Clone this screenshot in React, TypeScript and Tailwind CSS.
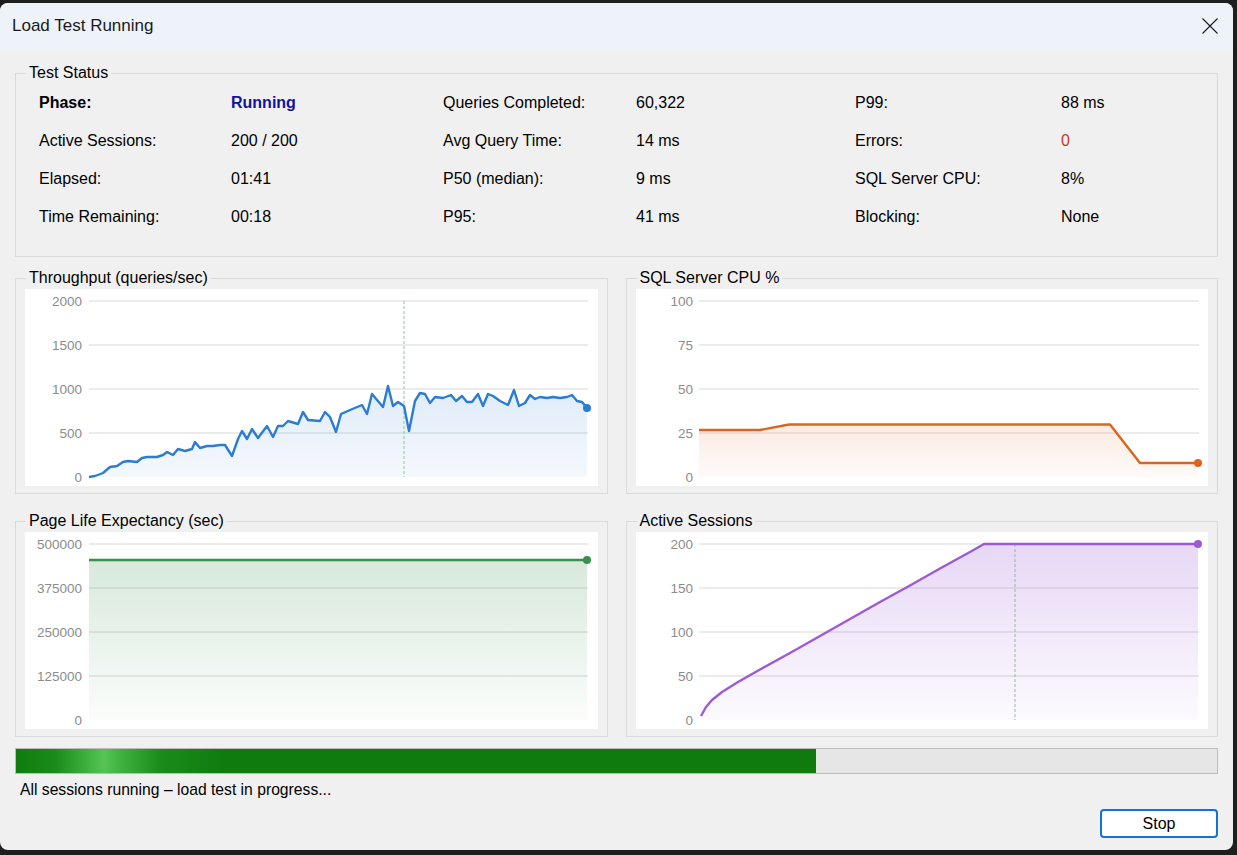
import React from "react";

type Pt = [number, number];

const thr: Pt[] = [
  [89, 478], [95, 477], [103, 474], [110, 468], [117, 467], [123, 463], [128, 462], [137, 463], [142, 459],
  [147, 458], [157, 458], [163, 456], [167, 453], [173, 456], [178, 450], [185, 452], [192, 450], [195, 443],
  [200, 449], [207, 447], [213, 447], [220, 446], [225, 446], [232, 457], [238, 440], [242, 432], [247, 440],
  [252, 430], [258, 439], [267, 427], [273, 438], [278, 427], [283, 427], [288, 422], [298, 425], [303, 413],
  [308, 421], [320, 422], [325, 413], [330, 418], [336, 433], [341, 415], [350, 411], [362, 406], [367, 415],
  [372, 395], [383, 408], [388, 387], [393, 407], [398, 403], [404, 407], [409, 432], [415, 402], [420, 394],
  [425, 395], [430, 404], [435, 398], [443, 399], [451, 396], [456, 402], [462, 397], [467, 403], [472, 403],
  [478, 395], [483, 407], [488, 395], [493, 397], [500, 402], [508, 406], [514, 391], [519, 407], [525, 404],
  [530, 396], [535, 400], [540, 398], [547, 399], [553, 398], [560, 399], [567, 398], [572, 396], [577, 402],
  [582, 403], [587, 409],
];

const cpu: Pt[] = [
  [699, 431], [760, 431], [789, 425.5], [1110, 425.5], [1140, 464], [1198, 464],
];

const ple: Pt[] = [
  [89, 561], [587, 561],
];

const ses: Pt[] = [
  [701, 717], [706, 708], [712, 701], [722, 693], [738, 683], [760, 670.5], [790, 654], [820, 637],
  [850, 620], [880, 603], [910, 586.5], [940, 569.5], [970, 553], [984, 545], [1198, 545],
];

function linePath(pts: Pt[]) {
  return pts.map((p, i) => `${i ? "L" : "M"}${p[0]},${p[1]}`).join(" ");
}

function areaPath(pts: Pt[], baseY: number) {
  const last = pts[pts.length - 1];
  const first = pts[0];
  return `${linePath(pts)} L${last[0]},${baseY} L${first[0]},${baseY} Z`;
}

type ChartProps = {
  id: string;
  title: string;
  vb: [number, number, number, number];
  labels: { t: string; y: number }[];
  labelX: number;
  gx1: number;
  gx2: number;
  baseY: number;
  pts: Pt[];
  color: string;
  aTop: number;
  aBot: number;
  dash?: { x: number; y1: number; y2: number; c: string };
};

function ChartBox(p: ChartProps) {
  const last = p.pts[p.pts.length - 1];
  return (
    <fieldset className="min-w-0 border border-[#dadada] px-[9px] pt-[2px] pb-[7px]">
      <legend className="ml-[1px] px-[3px] text-[16px] leading-[18px] text-black">{p.title}</legend>
      <div className="h-[197px] overflow-hidden bg-white">
        <svg width={p.vb[2]} height={p.vb[3]} viewBox={p.vb.join(" ")} className="block">
          <defs>
            <linearGradient id={p.id} x1="0" y1="0" x2="0" y2="1">
              <stop offset="0%" stopColor={p.color} stopOpacity={p.aTop} />
              <stop offset="100%" stopColor={p.color} stopOpacity={p.aBot} />
            </linearGradient>
          </defs>
          {p.labels.map((l) => (
            <g key={l.t}>
              {l.y < p.baseY - 2 && (
                <line x1={p.gx1} x2={p.gx2} y1={l.y} y2={l.y} stroke="#e4e4e4" strokeWidth={1.5} />
              )}
              <text
                x={p.labelX}
                y={l.y}
                textAnchor="end"
                dominantBaseline="central"
                fontFamily="'Liberation Sans', Arial, sans-serif"
                fontSize={13.5}
                fill="#8c8c8c"
              >
                {l.t}
              </text>
            </g>
          ))}
          <path d={areaPath(p.pts, p.baseY)} fill={`url(#${p.id})`} />
          {p.dash && (
            <line
              x1={p.dash.x}
              x2={p.dash.x}
              y1={p.dash.y1}
              y2={p.dash.y2}
              stroke={p.dash.c}
              strokeWidth={1}
              strokeDasharray="3 2"
            />
          )}
          <path d={linePath(p.pts)} fill="none" stroke={p.color} strokeWidth={2.4} strokeLinejoin="round" />
          <circle cx={last[0]} cy={last[1]} r={4} fill={p.color} />
        </svg>
      </div>
    </fieldset>
  );
}

const rows: { l: string; v: string; vc?: string; bold?: boolean }[][] = [
  [
    { l: "Phase:", v: "Running", vc: "text-[#12129c] font-bold", bold: true },
    { l: "Queries Completed:", v: "60,322" },
    { l: "P99:", v: "88 ms" },
  ],
  [
    { l: "Active Sessions:", v: "200 / 200" },
    { l: "Avg Query Time:", v: "14 ms" },
    { l: "Errors:", v: "0", vc: "text-[#c0392b]" },
  ],
  [
    { l: "Elapsed:", v: "01:41" },
    { l: "P50 (median):", v: "9 ms" },
    { l: "SQL Server CPU:", v: "8%" },
  ],
  [
    { l: "Time Remaining:", v: "00:18" },
    { l: "P95:", v: "41 ms" },
    { l: "Blocking:", v: "None" },
  ],
];

export default function App() {
  return (
    <div className="h-[855px] w-[1237px] overflow-hidden bg-[#1e1e1e] pt-[3px] font-['Liberation_Sans',Arial,sans-serif] text-black">
      <div className="flex h-[847px] w-[1233px] flex-col overflow-hidden rounded-[8px] bg-[#f0f0f0]">
        {/* Title bar */}
        <div className="flex h-[47px] shrink-0 items-center justify-between bg-[#eef2f9] pb-[1px] pl-[12px] pr-[15px]">
          <span className="text-[17px] leading-[20px] text-[#1a1a1a]">Load Test Running</span>
          <svg width="16" height="16" viewBox="0 0 16 16" className="block">
            <path d="M0.5 0.5 L15.5 15.5 M15.5 0.5 L0.5 15.5" stroke="#1a1a1a" strokeWidth="1.1" fill="none" />
          </svg>
        </div>

        <div className="flex flex-col px-[15px]">
          {/* Test Status */}
          <fieldset className="mt-[14px] border border-[#dadada] px-[9px] pt-[2px] pb-[20px]">
            <legend className="ml-[1px] px-[3px] text-[16px] leading-[18px]">Test Status</legend>
            <div className="ml-[14px] grid grid-cols-[192px_212px_193px_219px_206px_1fr] text-[16px] leading-[20px]">
              {rows.map((r, i) => (
                <React.Fragment key={i}>
                  {r.map((c) => (
                    <React.Fragment key={c.l}>
                      <div className={`flex h-[38px] items-center ${c.bold ? "font-bold" : ""}`}>{c.l}</div>
                      <div className={`flex h-[38px] items-center ${c.vc ?? ""}`}>{c.v}</div>
                    </React.Fragment>
                  ))}
                </React.Fragment>
              ))}
            </div>
          </fieldset>

          {/* Charts */}
          <div className="mt-[12px] grid grid-cols-2 gap-x-[18px] gap-y-[18px]">
            <ChartBox
              id="gThr"
              title="Throughput (queries/sec)"
              vb={[25, 290, 573, 197]}
              labels={[
                { t: "2000", y: 302 },
                { t: "1500", y: 346 },
                { t: "1000", y: 390 },
                { t: "500", y: 434 },
                { t: "0", y: 478 },
              ]}
              labelX={82}
              gx1={89}
              gx2={588}
              baseY={478}
              pts={thr}
              color="#2b7cd3"
              aTop={0.15}
              aBot={0.05}
              dash={{ x: 404, y1: 302, y2: 478, c: "#86cc94" }}
            />
            <ChartBox
              id="gCpu"
              title="SQL Server CPU %"
              vb={[636, 290, 573, 197]}
              labels={[
                { t: "100", y: 302 },
                { t: "75", y: 346 },
                { t: "50", y: 390 },
                { t: "25", y: 434 },
                { t: "0", y: 478 },
              ]}
              labelX={693}
              gx1={699}
              gx2={1199}
              baseY={478}
              pts={cpu}
              color="#dc641f"
              aTop={0.13}
              aBot={0.03}
            />
            <ChartBox
              id="gPle"
              title="Page Life Expectancy (sec)"
              vb={[25, 533, 573, 197]}
              labels={[
                { t: "500000", y: 545 },
                { t: "375000", y: 589 },
                { t: "250000", y: 633 },
                { t: "125000", y: 677 },
                { t: "0", y: 721 },
              ]}
              labelX={82}
              gx1={89}
              gx2={588}
              baseY={721}
              pts={ple}
              color="#3b8f4d"
              aTop={0.2}
              aBot={0.02}
            />
            <ChartBox
              id="gSes"
              title="Active Sessions"
              vb={[636, 533, 573, 197]}
              labels={[
                { t: "200", y: 545 },
                { t: "150", y: 589 },
                { t: "100", y: 633 },
                { t: "50", y: 677 },
                { t: "0", y: 721 },
              ]}
              labelX={693}
              gx1={699}
              gx2={1199}
              baseY={721}
              pts={ses}
              color="#9b5bd6"
              aTop={0.24}
              aBot={0.03}
              dash={{ x: 1015, y1: 545, y2: 721, c: "#9fb3a3" }}
            />
          </div>

          {/* Progress bar */}
          <div className="mt-[11px] h-[26px] border border-[#bcbcbc] bg-[#e6e6e6]">
            <div className="h-full w-[800px] bg-[linear-gradient(90deg,#0f7b0f_0%,#1a8c1a_5%,#3fb33f_9%,#55c455_11%,#3fb33f_13%,#1a8c1a_18%,#0f7b0f_26%,#0f7b0f_100%)]" />
          </div>

          <div className="mt-[6px] pl-[5px] text-[15.7px] leading-[20px]">All sessions running – load test in progress...</div>

          <div className="mt-[9px] flex justify-end">
            <button className="h-[29px] w-[118px] rounded-[4px] border-2 border-[#1373d3] bg-white text-[16px] leading-[20px] text-black">
              Stop
            </button>
          </div>
        </div>
      </div>
    </div>
  );
}
